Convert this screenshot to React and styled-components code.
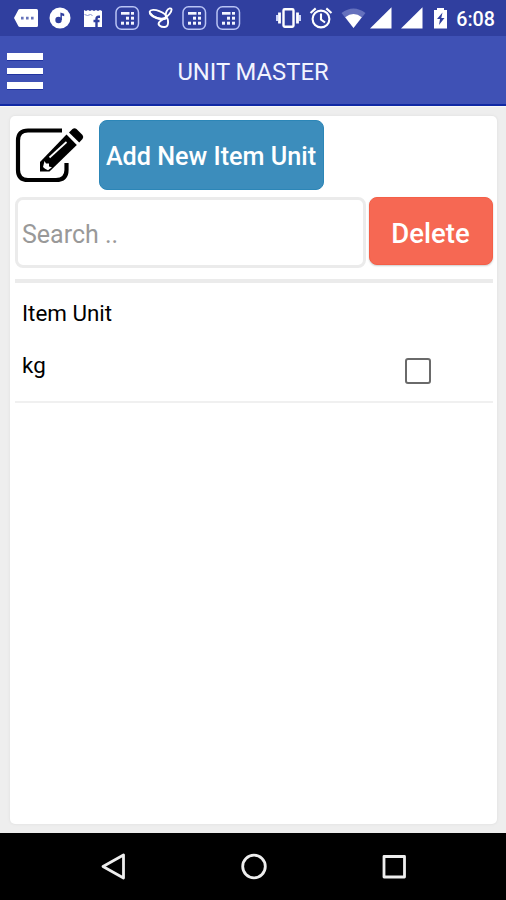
import React from "react";
import styled, { createGlobalStyle } from "styled-components";

const GlobalStyle = createGlobalStyle`
  * { box-sizing: border-box; }
  body { margin: 0; background: #eeeeee; font-family: Roboto, sans-serif; }
  button, input { font-family: inherit; }
`;

const Screen = styled.div`
  display: flex;
  flex-direction: column;
  width: 506px;
  height: 900px;
  background: #eeeeee;
`;

const StatusBar = styled.div`
  display: flex;
  justify-content: space-between;
  flex: none;
  height: 36px;
  padding: 4px 11px 4px 12px;
  background: #303f9f;
  color: #fff;
`;

const Notifications = styled.div`
  display: flex;
  gap: 5.7px;
`;

const SystemIcons = styled.div`
  display: flex;
`;

const StatusIcon = styled.svg`
  display: block;
  flex: none;
  width: ${(p) => p.$width || 28}px;
  height: 28px;
`;

const Clock = styled.span`
  width: 43.5px;
  text-align: right;
  font-size: 19.7px;
  font-weight: 500;
  line-height: 31px;
  white-space: nowrap;
`;

const AppBar = styled.header`
  display: grid;
  grid-template-columns: 44px 1fr 44px;
  flex: none;
  height: 70px;
  background: #3f51b5;
  border-bottom: 2px solid #1029a4;
`;

const MenuButton = styled.button`
  display: flex;
  flex-direction: column;
  gap: 7px;
  padding: 17px 0 0 7px;
  border: 0;
  background: none;
`;

const MenuBar = styled.span`
  width: 36px;
  height: 7.5px;
  background: #fff;
  border-bottom: 1px solid #22349f;
`;

const Title = styled.h1`
  margin: 0;
  text-align: center;
  color: #f2f4ff;
  font-size: 23.8px;
  font-weight: 400;
  line-height: 73px;
  white-space: nowrap;
`;

const Content = styled.main`
  flex: 1;
  padding: 9px 9px 9px 10px;
  border-top: 1px solid #f8f8f8;
`;

const Card = styled.section`
  height: 100%;
  padding: 4px 4px 0 5px;
  background: #fff;
  border-radius: 5px;
  box-shadow: 0 0 2px 1px #e5e5e5;
`;

const Actions = styled.div`
  display: flex;
  height: 77px;
`;

const EditIcon = styled.svg`
  display: block;
  width: 84px;
  height: 70px;
`;

const AddButton = styled.button`
  width: 225px;
  height: 70px;
  padding: 3px 1px 0 0;
  border: 1px solid #2c86b7;
  border-radius: 8px;
  background: #3c8dbc;
  color: #fff;
  font-size: 25.2px;
  font-weight: 500;
  white-space: nowrap;
`;

const SearchRow = styled.div`
  display: flex;
  gap: 3px;
  height: 86px;
  border-bottom: 4px solid #ebebeb;
`;

const SearchInput = styled.input`
  width: 351px;
  height: 71px;
  padding: 3px 4px 0;
  border: 3px solid #ebebeb;
  border-radius: 8px;
  outline: 0;
  background: #fff;
  color: #000;
  font-size: 25px;
  &::placeholder { color: #999; opacity: 1; }
`;

const DeleteButton = styled.button`
  width: 124px;
  height: 68px;
  padding: 4px 1px 0 0;
  border: 1px solid #f55f47;
  border-radius: 8px;
  background: #f66853;
  box-shadow: 0 1px 2px #ccc;
  color: #fff;
  font-size: 27.5px;
  font-weight: 500;
`;

const ListHeading = styled.div`
  height: 59px;
  padding: 12px 7px 0;
  font-size: 22.4px;
  line-height: 36px;
`;

const UnitRow = styled.label`
  display: flex;
  justify-content: space-between;
  height: 61px;
  padding: 5px 62px 0 7px;
  border-bottom: 2px solid #f0f0f0;
  font-size: 22.4px;
  line-height: 36px;
`;

const Checkbox = styled.input`
  appearance: none;
  width: 26px;
  height: 26px;
  margin: 11px 0 0;
  border: 2px solid #6a6a6a;
  border-radius: 3px;
  background: #fff;
`;

const NavBar = styled.nav`
  display: flex;
  justify-content: center;
  align-items: flex-start;
  gap: 112px;
  flex: none;
  height: 67px;
  padding: 19px 0 0 1px;
  background: #000;
`;

const NavIcon = styled.svg`
  display: block;
  width: 28px;
  height: 28px;
  fill: none;
  stroke: #eee;
  stroke-width: 2.8;
  stroke-linejoin: round;
`;

function CalculatorIcon() {
  return (
    <StatusIcon viewBox="0 0 28 28">
      <rect x="3" y="2.8" width="22.5" height="22.5" rx="5.5" fill="none" stroke="#b9c4f5" strokeWidth="1.5" />
      <g fill="#f4f6ff">
        <rect x="8" y="8" width="8.5" height="2.7" />
        <rect x="18" y="8" width="3" height="2.7" />
        <rect x="13" y="12.7" width="3" height="3" />
        <rect x="18" y="12.7" width="3" height="3" />
        <rect x="8" y="17.7" width="3" height="3" />
        <rect x="13" y="17.7" width="3" height="3" />
        <rect x="18" y="17.7" width="3" height="3" />
      </g>
    </StatusIcon>
  );
}

function SignalIcon({ width }) {
  return (
    <StatusIcon $width={width} viewBox={`0 0 ${width} 28`}>
      <path d="M0 24.5L21.5 3.2V24.5Z" fill="#fff" />
    </StatusIcon>
  );
}

export default function App() {
  return (
    <>
      <GlobalStyle />
      <Screen>
        <StatusBar>
          <Notifications>
            <StatusIcon viewBox="0 0 28 28">
              <path d="M8 5h16.5q1.5 0 1.5 1.5v15q0 1.5-1.5 1.5H8q-1 0-1.6-.8L2 14l4.4-8.2Q7 5 8 5Z" fill="#fff" />
              <path d="M9 12.8h2.6v2.6H9zM14 12.8h2.6v2.6H14zM19 12.8h2.6v2.6H19z" fill="#6673ba" />
            </StatusIcon>
            <StatusIcon viewBox="0 0 28 28">
              <circle cx="14" cy="14" r="10.5" fill="#fff" />
              <circle cx="12.5" cy="16" r="3.2" fill="#303f9f" />
              <path d="M14.4 16V8.5l3.8 1.3v2.5l-2.3-.7V16" fill="#303f9f" />
            </StatusIcon>
            <StatusIcon viewBox="0 0 28 28">
              <path d="M5 6l2 1 2-1 2 1 2-1 2 1 2-1 2 1 2-1 2 1v16H5Z" fill="#fff" />
              <path d="M5.5 10.5l3 1 3-1 2 1" fill="none" stroke="#8994cd" />
              <path d="M21 12.8h-1.4q-2.1 0-2.1 2.3v7.9M14.5 17h6" fill="none" stroke="#303f9f" strokeWidth="2.4" />
            </StatusIcon>
            <CalculatorIcon />
            <StatusIcon viewBox="0 0 28 28" fill="none" stroke="#fff" strokeWidth="1.9" strokeLinecap="round">
              <ellipse cx="11" cy="10.5" rx="8.8" ry="3.7" transform="rotate(20 11 10.5)" />
              <path d="M3.2 9.5C6 13.5 12 15.5 18 14.5" strokeWidth="2.4" />
              <path d="M18.8 12.5C22 15.5 22 22.5 17.8 23C13.5 23.3 10.6 20.8 12 18.4C13.5 16 19.5 14 22.5 10C25.5 6.2 25 3.9 22.6 4.4C20 5 18.2 9 18.8 12.5" />
            </StatusIcon>
            <CalculatorIcon />
            <CalculatorIcon />
          </Notifications>
          <SystemIcons>
            <StatusIcon $width={35} viewBox="0 0 35 28">
              <rect x="9.5" y="5.3" width="10" height="17.5" rx="1.2" fill="none" stroke="#fff" strokeWidth="2.4" />
              <path d="M5.5 8.5v11M23.5 8.5v11" stroke="#fff" strokeWidth="2.8" />
              <path d="M3 11v6M26 11v6" stroke="#cbd3fa" strokeWidth="2" />
            </StatusIcon>
            <StatusIcon $width={32} viewBox="0 0 32 28">
              <g fill="none" stroke="#fff" strokeWidth="2.1">
                <circle cx="12" cy="15" r="8.4" />
                <path d="M12 9.5v6l4 3M1.5 9l5.2-4.6M17.3 4.4L22.5 9" />
              </g>
            </StatusIcon>
            <StatusIcon $width={29} viewBox="0 0 29 28">
              <path d="M.5 9Q12.5 0 24.5 9L12.5 24Z" fill="#6571bd" />
              <path d="M4.2 13.2Q12.5 6.8 20.8 13.2L12.5 24Z" fill="#fff" />
            </StatusIcon>
            <SignalIcon width={31} />
            <SignalIcon width={31} />
            <StatusIcon $width={20} viewBox="0 0 20 28">
              <path d="M2 6h3V4h7v2h3v18.5H2Z" fill="#fff" />
              <path d="M10.5 8.5L5 15h3l-1 6L12.5 14H9.3Z" fill="#303f9f" />
            </StatusIcon>
            <Clock>6:08</Clock>
          </SystemIcons>
        </StatusBar>
        <AppBar>
          <MenuButton aria-label="Menu">
            <MenuBar />
            <MenuBar />
            <MenuBar />
          </MenuButton>
          <Title>UNIT MASTER</Title>
        </AppBar>
        <Content>
          <Card>
            <Actions>
              <EditIcon viewBox="0 0 84 70">
                <path d="M47 10.5H13Q3 10.5 3 20.5V50Q3 60 13 60H41Q51.5 60 51.5 50V43" fill="none" stroke="#000" strokeWidth="4.2" />
                <path d="M51.5 14.5L61.8 25L34.5 51.5H25V42Z" fill="#000" />
                <path d="M54 12.5L57.5 9Q59.5 7.5 61.5 9L67.5 15Q69 17 67.5 19L64.2 22.5Z" fill="#000" />
                <path d="M51.5 22L34.5 37.5" stroke="#fff" strokeWidth="1.7" />
                <path d="M29.5 41L31 43.5L34 43.5V46.5L37 47.3L33 50.2L30 48.8L28 47Z" fill="#fff" />
              </EditIcon>
              <AddButton>Add New Item Unit</AddButton>
            </Actions>
            <SearchRow>
              <SearchInput placeholder="Search .." />
              <DeleteButton>Delete</DeleteButton>
            </SearchRow>
            <ListHeading>Item Unit</ListHeading>
            <UnitRow>
              kg
              <Checkbox type="checkbox" />
            </UnitRow>
          </Card>
        </Content>
        <NavBar>
          <NavIcon viewBox="0 0 28 28"><path d="M3 14.5L23.5 3V26Z" /></NavIcon>
          <NavIcon viewBox="0 0 28 28"><circle cx="14" cy="14.5" r="11.3" /></NavIcon>
          <NavIcon viewBox="0 0 28 28"><rect x="4" y="4.5" width="20.5" height="20.5" /></NavIcon>
        </NavBar>
      </Screen>
    </>
  );
}
